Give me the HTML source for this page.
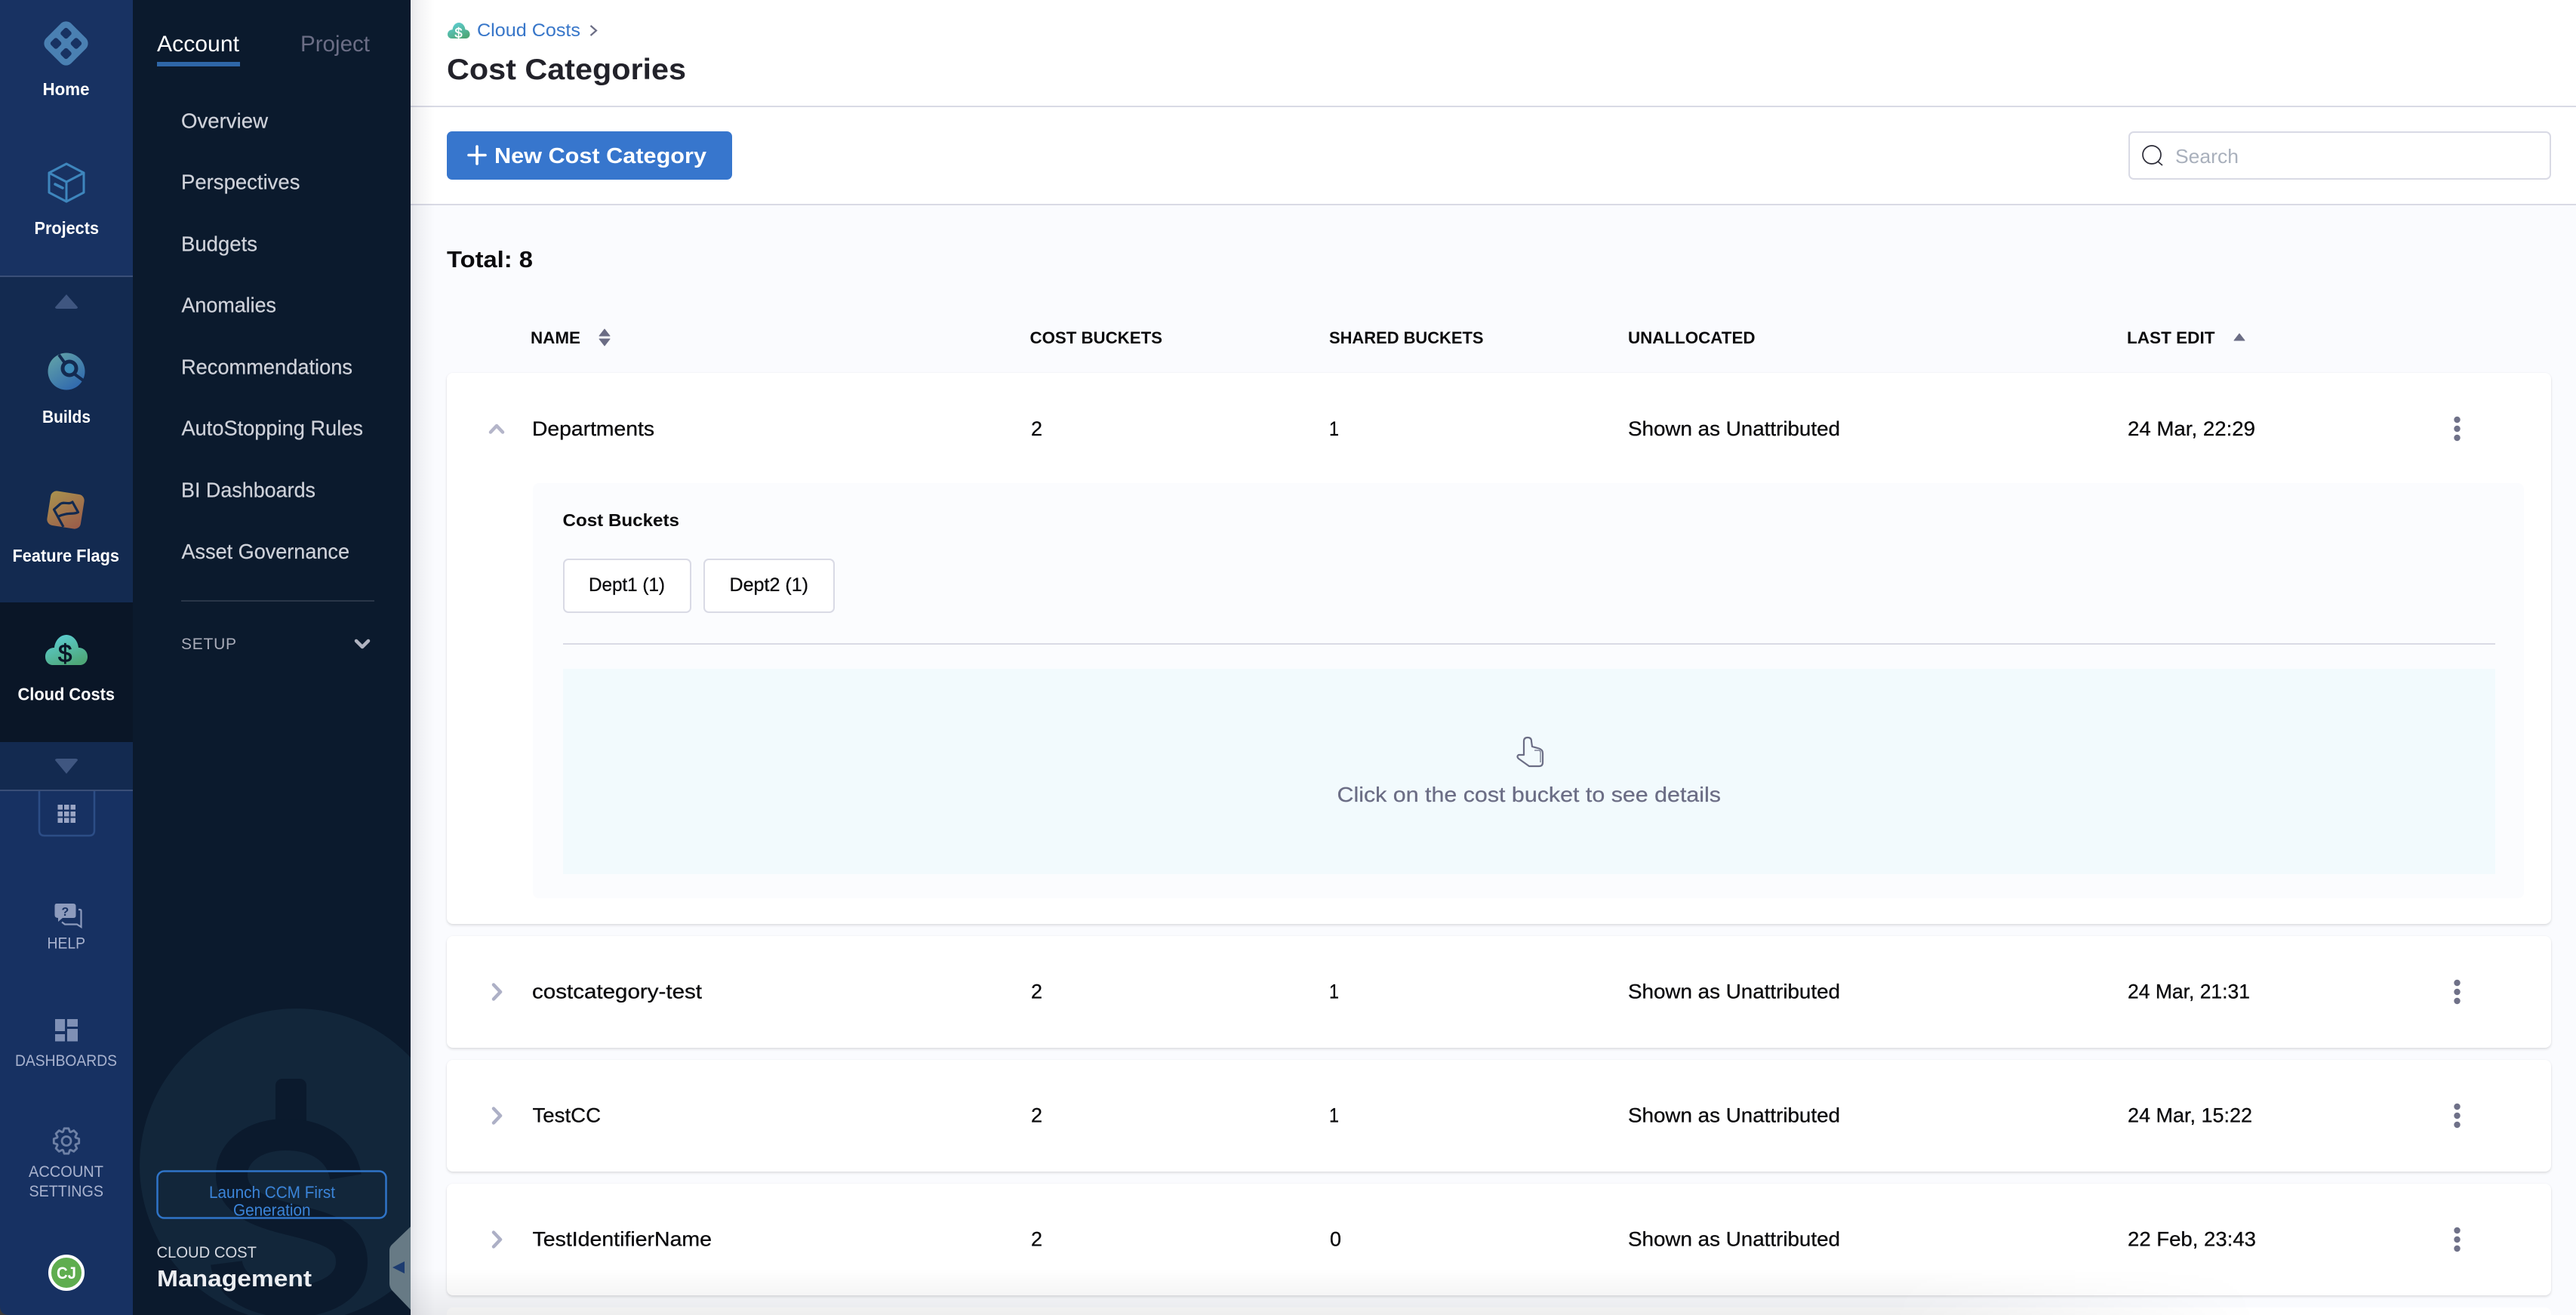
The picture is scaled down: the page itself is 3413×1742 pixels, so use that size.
<!DOCTYPE html>
<html lang="en">
<head>
<meta charset="utf-8">
<title>Cost Categories</title>
<style>
html,body{margin:0;padding:0;width:3413px;height:1742px;overflow:hidden;background:#fafbfe}
body{position:relative;font-family:"Liberation Sans",sans-serif}
.a{position:absolute;box-sizing:border-box}
.card{left:592px;width:2788px;background:#fff;border-radius:8px;box-shadow:0 2px 3px rgba(0,0,0,.11),0 0 2px rgba(40,41,61,.05)}
svg text{font-family:"Liberation Sans",sans-serif;white-space:pre}
.nav{font-weight:700;font-size:23.5px;fill:#fff}
.sub{font-size:21px;fill:#a9b3cf}
.menu{font-size:27.5px;fill:#cfd2da;stroke:#cfd2da;stroke-width:.2px}
.cell{font-size:27px;fill:#0b0b0d;stroke:#0b0b0d;stroke-width:.3px}
.th{font-size:22px;font-weight:700;fill:#0b0b0d}
</style>
</head>
<body>
<div class="a" style="left:544px;top:0;width:2869px;height:271px;background:#fff"></div>
<div class="a" style="left:544px;top:140px;width:2869px;height:2px;background:#d9dae5"></div>
<div class="a" style="left:544px;top:270px;width:2869px;height:2px;background:#d9dae5"></div>
<div class="a" style="left:592px;top:174px;width:378px;height:64px;background:#3776cd;border-radius:7px"></div>
<div class="a" style="left:2820px;top:174px;width:559.5px;height:64px;background:#fff;border:2px solid #d9dae5;border-radius:7px"></div>

<div class="a card" style="top:494px;height:730px"></div>
<div class="a" style="left:706px;top:640px;width:2638px;height:550px;background:#fbfcfe;border-radius:8px"></div>
<div class="a" style="left:746px;top:740px;width:170px;height:72px;background:#fff;border:2px solid #d9dae5;border-radius:7px"></div>
<div class="a" style="left:932px;top:740px;width:174px;height:72px;background:#fff;border:2px solid #d9dae5;border-radius:7px"></div>
<div class="a" style="left:746px;top:852px;width:2560px;height:2px;background:#d9dae5"></div>
<div class="a" style="left:746px;top:886px;width:2560px;height:272px;background:#f2fafd"></div>

<div class="a card" style="top:1240px;height:148px"></div>
<div class="a card" style="top:1404px;height:148px"></div>
<div class="a card" style="top:1568px;height:148px"></div>
<div class="a" style="left:592px;top:1732px;width:2788px;height:10px;background:#fff;border-radius:8px 8px 0 0"></div>

<div class="a" style="left:544px;top:1680px;width:2450px;height:62px;background:linear-gradient(to bottom,rgba(0,0,0,0),rgba(0,0,0,.065));-webkit-mask-image:linear-gradient(to right,#000 80%,transparent)"></div>
<div class="a" style="left:544px;top:0;width:32px;height:1742px;background:linear-gradient(to right,rgba(40,41,61,.1),rgba(40,41,61,.05) 35%,rgba(40,41,61,0))"></div>

<div class="a" style="left:0;top:0;width:176px;height:366px;background:#183262"></div>
<div class="a" style="left:0;top:366px;width:176px;height:432px;background:#132a50"></div>
<div class="a" style="left:0;top:798px;width:176px;height:185px;background:#0a1627"></div>
<div class="a" style="left:0;top:983px;width:176px;height:64px;background:#132a50"></div>
<div class="a" style="left:0;top:1047px;width:176px;height:695px;background:#173162"></div>
<div class="a" style="left:0;top:365px;width:176px;height:2px;background:#3a4f78"></div>
<div class="a" style="left:0;top:1046px;width:176px;height:2px;background:#3a4f78"></div>
<div class="a" style="left:176px;top:0;width:368px;height:1742px;background:#0b1a2d"></div>

<svg class="a" style="left:0;top:0;display:block" width="3413" height="1742" viewBox="0 0 3413 1742" xmlns="http://www.w3.org/2000/svg">
<defs>
<clipPath id="mc"><rect x="176" y="0" width="368" height="1742"/></clipPath>
<linearGradient id="cg" gradientUnits="userSpaceOnUse" x1="80" y1="841" x2="96" y2="881"><stop offset="0" stop-color="#5ccccf"/><stop offset="1" stop-color="#4ea778"/></linearGradient>
<linearGradient id="cg2" gradientUnits="userSpaceOnUse" x1="603" y1="30" x2="612" y2="51"><stop offset="0" stop-color="#5ccccf"/><stop offset="1" stop-color="#4ea778"/></linearGradient>
<linearGradient id="bg" gradientUnits="userSpaceOnUse" x1="70" y1="472" x2="100" y2="516"><stop offset="0" stop-color="#5f9fa8"/><stop offset="1" stop-color="#2f68ae"/></linearGradient>
<linearGradient id="fg" gradientUnits="userSpaceOnUse" x1="66" y1="652" x2="108" y2="700"><stop offset="0" stop-color="#a9924e"/><stop offset="1" stop-color="#9a5a4a"/></linearGradient>
</defs>

<!-- menu watermark -->
<g clip-path="url(#mc)">
<circle cx="393" cy="1544" r="208" fill="#12263a"/>
<rect x="365" y="1429" width="41" height="70" rx="9" fill="#0b1a2d"/>
<path d="M458 1559C452 1522 420 1503 378 1503C338 1503 307 1525 307 1556C307 1596 350 1607 395 1618C440 1629 466 1640 466 1672C466 1705 430 1724 385 1724C340 1724 304 1705 300 1673" fill="none" stroke="#0b1a2d" stroke-width="42"/>
<path d="M544 1625L519 1649Q516 1652 516 1657L516 1700Q516 1705 519 1709L544 1735Z" fill="#677a85"/>
<path d="M520 1679L536 1671L536 1687Z" fill="#1d3c70"/>
</g>

<!-- rail: home -->
<g transform="translate(87.5 57.5) rotate(45)"><rect x="-23.5" y="-23.5" width="47" height="47" rx="10" fill="#4a80b2"/>
<g fill="#183262"><rect x="-15.5" y="-15.5" width="12" height="12" rx="3"/><rect x="3.5" y="-15.5" width="12" height="12" rx="3"/><rect x="-15.5" y="3.5" width="12" height="12" rx="3"/><rect x="3.5" y="3.5" width="12" height="12" rx="3"/></g></g>
<text class="nav" x="56.5" y="126" textLength="62" lengthAdjust="spacingAndGlyphs">Home</text>

<!-- projects -->
<g fill="none" stroke="#3e86bd" stroke-width="3" stroke-linejoin="round" stroke-linecap="round">
<path d="M88 217L111 229L111 255L88 267L65 255L65 229Z"/><path d="M65 229L88 241L111 229M88 241L88 267"/><path d="M73 244L83 249" stroke-width="3.5"/>
</g>
<text class="nav" x="45.5" y="310" textLength="85.5" lengthAdjust="spacingAndGlyphs">Projects</text>

<!-- scroll up -->
<path d="M73 407Q73 409 76 409L100 409Q103 409 103 407L88 390Z" fill="#3f5680"/>

<!-- builds -->
<circle cx="88" cy="492" r="24.5" fill="url(#bg)"/>
<circle cx="92" cy="488" r="9" fill="#3d8ab8" stroke="#132a50" stroke-width="5"/>
<path d="M78 470L86 481M98 495L113 506" stroke="#132a50" stroke-width="4" fill="none"/>
<text class="nav" x="56" y="560" textLength="64" lengthAdjust="spacingAndGlyphs">Builds</text>

<!-- feature flags -->
<rect x="64.5" y="652.5" width="45" height="46" rx="8" transform="rotate(9 87 675.5)" fill="url(#fg)"/>
<path d="M84 698L71.5 675L80 667.5C85 664 91 669 96 665L103.500 678.5C98 682 90 678 76.600 684.500" fill="none" stroke="#132a50" stroke-width="3.200" stroke-linejoin="round"/>
<text class="nav" x="16.5" y="744" textLength="141.5" lengthAdjust="spacingAndGlyphs">Feature Flags</text>

<!-- cloud costs -->
<path d="M70 881C64 881 60 876 60 870C60 863 65 858 72 858C73 848 80 841 88 841C96 841 103 848 104 858C111 858 116 863 116 870C116 876 112 881 106 881Z" fill="url(#cg)"/>
<text x="77" y="877" font-size="33" font-weight="400" stroke="#0a1627" stroke-width=".8" fill="#0a1627">$</text>
<text class="nav" x="23.5" y="927.5" textLength="128.5" lengthAdjust="spacingAndGlyphs">Cloud Costs</text>

<!-- scroll down -->
<path d="M73 1007Q73 1005 76 1005L100 1005Q103 1005 103 1007L88 1025Z" fill="#3f5680"/>

<!-- module grid tab -->
<path d="M52 1048L52 1100Q52 1107 59 1107L118 1107Q125 1107 125 1100L125 1048" fill="none" stroke="#2c4d86" stroke-width="2.5"/>
<g fill="#9aa5c4"><rect x="76.5" y="1066" width="6.5" height="6.5"/><rect x="85" y="1066" width="6.5" height="6.5"/><rect x="93.5" y="1066" width="6.5" height="6.5"/><rect x="76.5" y="1075" width="6.5" height="6.5"/><rect x="85" y="1075" width="6.5" height="6.5"/><rect x="93.5" y="1075" width="6.5" height="6.5"/><rect x="76.5" y="1083.5" width="6.5" height="6.5"/><rect x="85" y="1083.5" width="6.5" height="6.5"/><rect x="93.5" y="1083.5" width="6.5" height="6.5"/></g>

<!-- help -->
<path d="M75 1197L97 1197Q100.500 1197 100.500 1200.500L100.500 1213Q100.500 1216 97 1216L83 1216L77 1221L77 1216Q72.500 1216 72.500 1212L72.500 1200Q72.500 1197 75 1197Z" fill="#8d9bbd"/>
<path d="M104 1205L106 1205Q107.500 1205 107.500 1207L107.500 1228L102 1224.500L86 1224.500L82 1221.500" fill="none" stroke="#8d9bbd" stroke-width="2.2"/>
<text x="81.500" y="1213" font-size="16" font-weight="700" fill="#173162">?</text>
<text class="sub" x="62.500" y="1256.500" textLength="50.500" lengthAdjust="spacingAndGlyphs">HELP</text>

<!-- dashboards -->
<g fill="#7f90b5"><rect x="73" y="1350" width="13" height="16"/><rect x="89" y="1350" width="14" height="10"/><rect x="73" y="1370" width="13" height="9.500"/><rect x="89" y="1363" width="14" height="16.500"/></g>
<text class="sub" x="20" y="1412" textLength="135" lengthAdjust="spacingAndGlyphs">DASHBOARDS</text>

<!-- settings gear -->
<g transform="translate(88 1511.500)" fill="none" stroke="#6e81a6" stroke-width="2.800" stroke-linejoin="round">
<path d="M-4.450-12.200L-2.950-16.700L2.950-16.700L4.450-12.200L5.500-11.800L9.750-13.900L13.900-9.750L11.800-5.500L12.200-4.450L16.700-2.950L16.700 2.950L12.200 4.450L11.800 5.500L13.900 9.750L9.750 13.900L5.500 11.800L4.450 12.200L2.950 16.700L-2.950 16.700L-4.450 12.200L-5.500 11.800L-9.750 13.900L-13.900 9.750L-11.800 5.500L-12.200 4.450L-16.700 2.950L-16.700-2.950L-12.200-4.450L-11.800-5.500L-13.900-9.750L-9.750-13.900L-5.500-11.800Z"/>
<circle cx="0" cy="0" r="6"/></g>
<text class="sub" x="38" y="1559" textLength="99" lengthAdjust="spacingAndGlyphs">ACCOUNT</text>
<text class="sub" x="38.500" y="1585" textLength="98.500" lengthAdjust="spacingAndGlyphs">SETTINGS</text>

<!-- avatar -->
<circle cx="88" cy="1686" r="22" fill="#5fad4f" stroke="#fff" stroke-width="4"/>
<text x="75" y="1694" font-size="22" font-weight="700" fill="#fff" textLength="26" lengthAdjust="spacingAndGlyphs">CJ</text>
<path d="M0 1730Q0 1742 12 1742L0 1742Z" fill="#3a3a3a"/>

<!-- menu -->
<text x="208" y="68" font-size="30" fill="#fff" textLength="109" lengthAdjust="spacingAndGlyphs">Account</text>
<rect x="208" y="82" width="110" height="6" fill="#2f67a8"/>
<text x="398" y="68" font-size="30" fill="#6b6d85" textLength="92" lengthAdjust="spacingAndGlyphs">Project</text>
<text class="menu" x="240" y="169.500" textLength="115" lengthAdjust="spacingAndGlyphs">Overview</text>
<text class="menu" x="240" y="250.700" textLength="157.500" lengthAdjust="spacingAndGlyphs">Perspectives</text>
<text class="menu" x="240" y="332.600" textLength="101" lengthAdjust="spacingAndGlyphs">Budgets</text>
<text class="menu" x="240.500" y="413.700" textLength="125.500" lengthAdjust="spacingAndGlyphs">Anomalies</text>
<text class="menu" x="240" y="495.600" textLength="227" lengthAdjust="spacingAndGlyphs">Recommendations</text>
<text class="menu" x="240.500" y="576.700" textLength="240.500" lengthAdjust="spacingAndGlyphs">AutoStopping Rules</text>
<text class="menu" x="240" y="658.500" textLength="178" lengthAdjust="spacingAndGlyphs">BI Dashboards</text>
<text class="menu" x="240.500" y="740" textLength="222.500" lengthAdjust="spacingAndGlyphs">Asset Governance</text>
<rect x="240" y="795" width="256" height="2" fill="#2a3648"/>
<text x="240" y="860" font-size="21" fill="#a9acb9" textLength="73" lengthAdjust="spacing">SETUP</text>
<path d="M472 849L480 857L488 849" fill="none" stroke="#b0b3c0" stroke-width="4.500" stroke-linecap="round" stroke-linejoin="round"/>

<!-- launch button -->
<rect x="208.500" y="1551.500" width="303" height="62" rx="9" fill="none" stroke="#2f74c8" stroke-width="2.500"/>
<text x="277" y="1587" font-size="22" fill="#3b84d8" textLength="167" lengthAdjust="spacingAndGlyphs">Launch CCM First</text>
<text x="309" y="1610.500" font-size="22" fill="#3b84d8" textLength="102.500" lengthAdjust="spacingAndGlyphs">Generation</text>
<text x="207.500" y="1666" font-size="21" fill="#d5d8e0" textLength="132.500" lengthAdjust="spacingAndGlyphs">CLOUD COST</text>
<text x="208" y="1704" font-size="31" font-weight="700" fill="#eceef2" textLength="205" lengthAdjust="spacingAndGlyphs">Management</text>

<!-- breadcrumb -->
<path d="M598.500 51C595.300 51 593 48.500 593 45.500C593 42 595.800 39.300 599.500 39.300C600 34 603.500 30 608 30C612.500 30 616 34 616.500 39.300C620 39.300 622.500 42 622.500 45.500C622.500 48.500 620.300 51 617 51Z" fill="url(#cg2)"/>
<text x="602.500" y="50" font-size="18" fill="#fff" stroke="#fff" stroke-width=".5">$</text>
<text x="632" y="48" font-size="24.500" fill="#3776c9" textLength="137" lengthAdjust="spacingAndGlyphs">Cloud Costs</text>
<path d="M782.500 34L790 40.500L782.500 47" fill="none" stroke="#6b6d85" stroke-width="2.200"/>
<text x="592" y="105" font-size="39" font-weight="700" fill="#22222a" textLength="317" lengthAdjust="spacingAndGlyphs">Cost Categories</text>

<!-- new button -->
<path d="M632 194L632 217M621 205.500L643 205.500" stroke="#fff" stroke-width="3.600" stroke-linecap="round"/>
<text x="655" y="216" font-size="29" font-weight="700" fill="#fff" textLength="281" lengthAdjust="spacingAndGlyphs">New Cost Category</text>

<!-- search -->
<circle cx="2851" cy="205" r="12" fill="none" stroke="#2c2c38" stroke-width="1.700"/>
<path d="M2859 214L2865 219" stroke="#2c2c38" stroke-width="1.700"/>
<text x="2882" y="216" font-size="26" fill="#a9b0bc" textLength="84" lengthAdjust="spacingAndGlyphs">Search</text>

<text x="592" y="354" font-size="31" font-weight="700" fill="#0b0b0d" textLength="114" lengthAdjust="spacingAndGlyphs">Total: 8</text>

<!-- headers -->
<text class="th" x="703" y="455" textLength="66" lengthAdjust="spacingAndGlyphs">NAME</text>
<path d="M794 445L808 445L801 436Z M794 449L808 449L801 458Z" fill="#6b6d85" stroke="#6b6d85" stroke-linejoin="round"/>
<text class="th" x="1364.500" y="455" textLength="175.500" lengthAdjust="spacingAndGlyphs">COST BUCKETS</text>
<text class="th" x="1761" y="455" textLength="204.500" lengthAdjust="spacingAndGlyphs">SHARED BUCKETS</text>
<text class="th" x="2157" y="455" textLength="168.500" lengthAdjust="spacingAndGlyphs">UNALLOCATED</text>
<text class="th" x="2818" y="455" textLength="116.500" lengthAdjust="spacingAndGlyphs">LAST EDIT</text>
<path d="M2960 451L2974 451L2967 442Z" fill="#6b6d85" stroke="#6b6d85" stroke-linejoin="round"/>

<!-- row 1 -->
<path d="M650 572.500L658 564L666 572.500" fill="none" stroke="#b4b5c9" stroke-width="4.500" stroke-linecap="round" stroke-linejoin="round"/>
<text class="cell" x="705" y="577" textLength="162" lengthAdjust="spacingAndGlyphs">Departments</text>
<text class="cell" x="1366" y="577" textLength="15" lengthAdjust="spacingAndGlyphs">2</text>
<text class="cell" x="1761" y="577" textLength="13" lengthAdjust="spacingAndGlyphs">1</text>
<text class="cell" x="2157" y="577" textLength="281" lengthAdjust="spacingAndGlyphs">Shown as Unattributed</text>
<text class="cell" x="2819" y="577" textLength="169" lengthAdjust="spacingAndGlyphs">24 Mar, 22:29</text>
<g fill="#6f7188"><circle cx="3255.500" cy="556" r="4.200"/><circle cx="3255.500" cy="568" r="4.200"/><circle cx="3255.500" cy="580" r="4.200"/></g>

<!-- expanded -->
<text x="745.500" y="697" font-size="23" font-weight="700" fill="#0b0b0d" textLength="154.500" lengthAdjust="spacingAndGlyphs">Cost Buckets</text>
<text class="cell" x="780" y="783" style="font-size:25px" textLength="101" lengthAdjust="spacingAndGlyphs">Dept1 (1)</text>
<text class="cell" x="966.500" y="783" style="font-size:25px" textLength="104.500" lengthAdjust="spacingAndGlyphs">Dept2 (1)</text>

<!-- hand -->
<path d="M2019 1000L2019 982Q2019 977 2024 977Q2029 977 2029 982L2030 989L2039 991.500Q2044 993 2044 998L2044 1010Q2044 1015 2039 1015L2026 1015L2012 1005Q2009 1002 2012 1000Z" fill="none" stroke="#6b6d85" stroke-width="2.200" stroke-linejoin="round"/>
<path d="M2033 994L2039 994Q2041 994 2041 997L2041 1010" fill="none" stroke="#6b6d85" stroke-width="1.200"/>
<text x="1771.500" y="1062" font-size="27.500" fill="#6b6d85" stroke="#6b6d85" stroke-width=".25" textLength="508.500" lengthAdjust="spacingAndGlyphs">Click on the cost bucket to see details</text>

<!-- row 2 -->
<path d="M654 1304.500L663 1314L654 1323.500" fill="none" stroke="#adb0c6" stroke-width="4.500" stroke-linecap="round" stroke-linejoin="round"/>
<text class="cell" x="705" y="1322.700" textLength="225" lengthAdjust="spacingAndGlyphs">costcategory-test</text>
<text class="cell" x="1366" y="1322.700" textLength="15" lengthAdjust="spacingAndGlyphs">2</text>
<text class="cell" x="1761" y="1322.700" textLength="13" lengthAdjust="spacingAndGlyphs">1</text>
<text class="cell" x="2157" y="1322.700" textLength="281" lengthAdjust="spacingAndGlyphs">Shown as Unattributed</text>
<text class="cell" x="2819" y="1322.700" textLength="162" lengthAdjust="spacingAndGlyphs">24 Mar, 21:31</text>
<g fill="#6f7188"><circle cx="3255.500" cy="1302" r="4.200"/><circle cx="3255.500" cy="1314" r="4.200"/><circle cx="3255.500" cy="1326" r="4.200"/></g>

<!-- row 3 -->
<path d="M654 1468.500L663 1478L654 1487.500" fill="none" stroke="#adb0c6" stroke-width="4.500" stroke-linecap="round" stroke-linejoin="round"/>
<text class="cell" x="705.500" y="1486.500" textLength="90.500" lengthAdjust="spacingAndGlyphs">TestCC</text>
<text class="cell" x="1366" y="1486.500" textLength="15" lengthAdjust="spacingAndGlyphs">2</text>
<text class="cell" x="1761" y="1486.500" textLength="13" lengthAdjust="spacingAndGlyphs">1</text>
<text class="cell" x="2157" y="1486.500" textLength="281" lengthAdjust="spacingAndGlyphs">Shown as Unattributed</text>
<text class="cell" x="2819" y="1486.500" textLength="165" lengthAdjust="spacingAndGlyphs">24 Mar, 15:22</text>
<g fill="#6f7188"><circle cx="3255.500" cy="1466" r="4.200"/><circle cx="3255.500" cy="1478" r="4.200"/><circle cx="3255.500" cy="1490" r="4.200"/></g>

<!-- row 4 -->
<path d="M654 1632.500L663 1642L654 1651.500" fill="none" stroke="#adb0c6" stroke-width="4.500" stroke-linecap="round" stroke-linejoin="round"/>
<text class="cell" x="705.500" y="1650.500" textLength="237.500" lengthAdjust="spacingAndGlyphs">TestIdentifierName</text>
<text class="cell" x="1366" y="1650.500" textLength="15" lengthAdjust="spacingAndGlyphs">2</text>
<text class="cell" x="1762" y="1650.500" textLength="15" lengthAdjust="spacingAndGlyphs">0</text>
<text class="cell" x="2157" y="1650.500" textLength="281" lengthAdjust="spacingAndGlyphs">Shown as Unattributed</text>
<text class="cell" x="2819" y="1650.500" textLength="170" lengthAdjust="spacingAndGlyphs">22 Feb, 23:43</text>
<g fill="#6f7188"><circle cx="3255.500" cy="1630" r="4.200"/><circle cx="3255.500" cy="1642" r="4.200"/><circle cx="3255.500" cy="1654" r="4.200"/></g>
</svg>
</body>
</html>
